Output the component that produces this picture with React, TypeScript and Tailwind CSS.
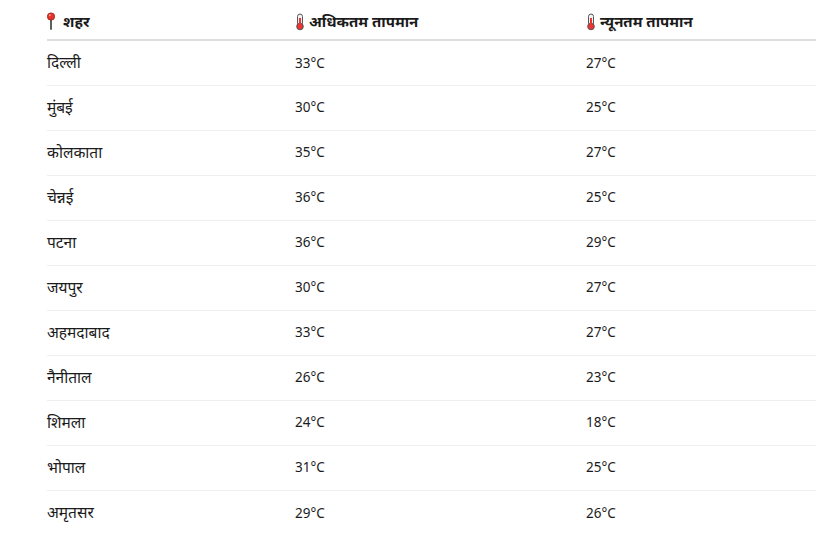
import React from 'react';

const rows = [
  { city: 'दिल्ली', max: '33°C', min: '27°C' },
  { city: 'मुंबई', max: '30°C', min: '25°C' },
  { city: 'कोलकाता', max: '35°C', min: '27°C' },
  { city: 'चेन्नई', max: '36°C', min: '25°C' },
  { city: 'पटना', max: '36°C', min: '29°C' },
  { city: 'जयपुर', max: '30°C', min: '27°C' },
  { city: 'अहमदाबाद', max: '33°C', min: '27°C' },
  { city: 'नैनीताल', max: '26°C', min: '23°C' },
  { city: 'शिमला', max: '24°C', min: '18°C' },
  { city: 'भोपाल', max: '31°C', min: '25°C' },
  { city: 'अमृतसर', max: '29°C', min: '26°C' },
];

// 📍 drawn as svg (no emoji font)
const Pin = () => (
  <svg width="8" height="19" viewBox="0 0 8 19" className="inline-block mr-[8px]">
    <rect x="3" y="7" width="2" height="11" rx="1" fill="#5f5f5f" />
    <circle cx="4" cy="4.5" r="3.6" fill="#e8332a" stroke="#9c1c15" strokeWidth="0.9" />
    <circle cx="2.8" cy="3.3" r="1" fill="#ff9a90" />
  </svg>
);

// 🌡️
const Thermo = () => (
  <svg width="8" height="18" viewBox="0 0 8 18" className="inline-block ml-[1px] mr-[5px]">
    <rect x="1.5" y="1" width="5" height="12" rx="2.5" fill="#f2f2f2" stroke="#555" strokeWidth="1" />
    <circle cx="4" cy="13.5" r="3.3" fill="#e33" stroke="#555" strokeWidth="1" />
    <rect x="3" y="5" width="2" height="8" fill="#e33" />
  </svg>
);

export default function App() {
  return (
    <div className="w-[819px] h-[538px] overflow-hidden bg-white pl-[47px] text-[#1b1b1b]" style={{ fontFamily: '"Noto Sans", "Open Sans", sans-serif' }}>
      <table className="w-[769px] border-collapse text-left">
        <thead>
          <tr className="h-[40px] border-b-2 border-[#dedede] text-[15px] font-bold">
            <th className="w-[248px] pt-[4px] font-bold">
              <span className="flex items-center"><Pin />शहर</span>
            </th>
            <th className="w-[291px] pt-[4px] font-bold">
              <span className="flex items-center"><Thermo />अधिकतम तापमान</span>
            </th>
            <th className="pt-[4px] font-bold">
              <span className="flex items-center"><Thermo />न्यूनतम तापमान</span>
            </th>
          </tr>
        </thead>
        <tbody>
          {rows.map((r, i) => (
            <tr key={r.city} className={`h-[45px] ${i < rows.length - 1 ? 'border-b border-[#efefef]' : ''}`}>
              <td className="text-[15.5px]">{r.city}</td>
              <td className="text-[13.5px]">{r.max}</td>
              <td className="text-[13.5px]">{r.min}</td>
            </tr>
          ))}
        </tbody>
      </table>
    </div>
  );
}
